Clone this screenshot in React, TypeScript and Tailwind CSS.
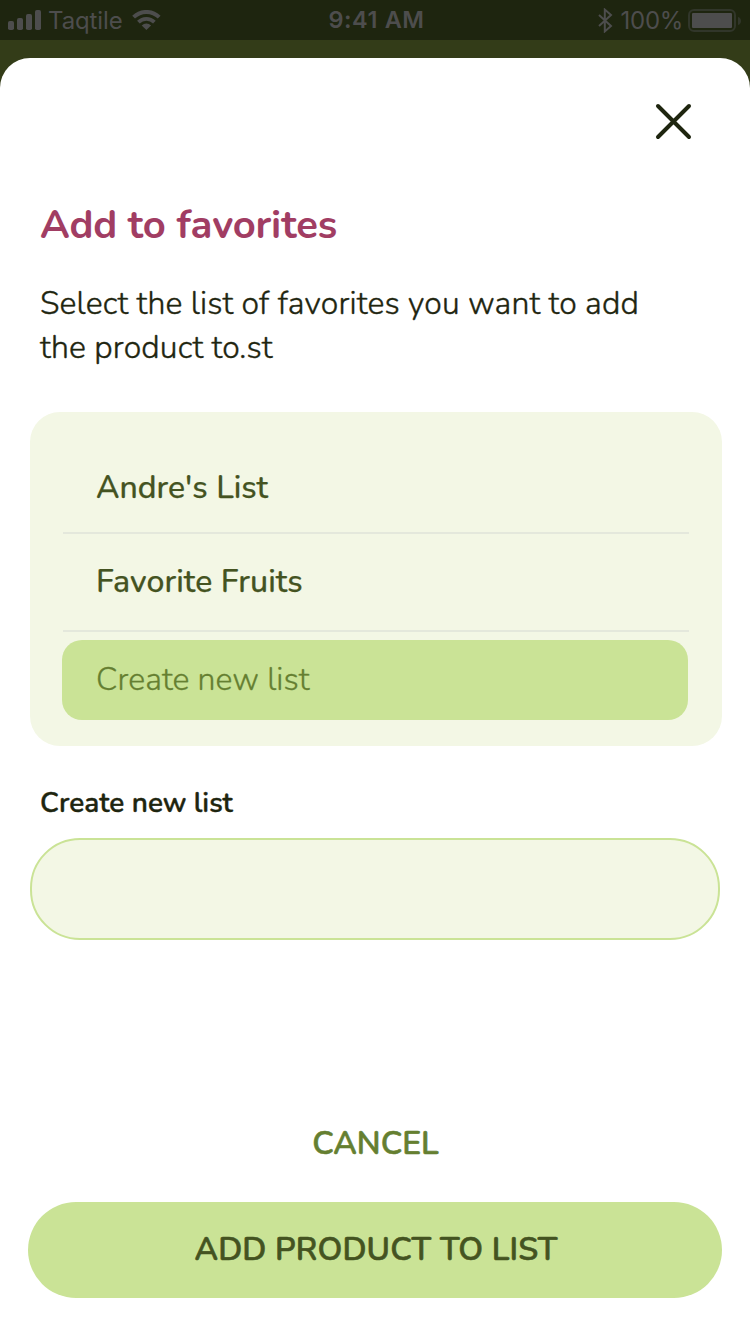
import React, { useState } from "react";

const lists = ["Andre's List", "Favorite Fruits"];

function StatusBar() {
  return (
    <header className="flex h-10 shrink-0 items-center justify-between bg-[#1e250f] text-[#4d4d4d] font-['Inter','Liberation_Sans',sans-serif] text-[24px] leading-10">
      <div className="flex flex-1 items-center pl-2">
        <svg width="33" height="20" viewBox="0 0 33 20" fill="currentColor">
          <rect x="0" y="11" width="6" height="9" rx="1.8" />
          <rect x="9" y="8" width="6" height="12" rx="1.8" />
          <rect x="18" y="4" width="6" height="16" rx="1.8" />
          <rect x="27" y="0" width="6" height="20" rx="1.8" />
        </svg>
        <span className="ml-[7px] w-[76px] pt-0.5 leading-[38px] tracking-[-0.1px] whitespace-nowrap">Taqtile</span>
        <svg className="ml-2" width="29" height="20" viewBox="0 0 29 20">
          <path d="M1.6 7.2A18.2 18.2 0 0 1 27.2 7.2" fill="none" stroke="currentColor" strokeWidth="4" />
          <path d="M6.4 12.1A11.4 11.4 0 0 1 22.4 12.1" fill="none" stroke="currentColor" strokeWidth="3.8" />
          <path d="M14.4 20 9.7 15.4a6.8 6.8 0 0 1 9.4 0Z" fill="currentColor" />
        </svg>
      </div>
      <span className="pl-[3px] text-[23.5px] font-semibold tracking-[0.6px] whitespace-nowrap">9:41 AM</span>
      <div className="flex flex-1 items-center justify-end pr-2">
        <svg width="15" height="25" viewBox="0 0 15 25" fill="none" stroke="currentColor" strokeWidth="2">
          <path d="m1 7 12 11-6.2 5.4V1.6L13 7 1 18" />
        </svg>
        <span className="ml-2 pt-0.5 leading-[38px] tracking-[-0.3px] whitespace-nowrap">100%</span>
        <svg className="mt-px ml-[5px]" width="54" height="24" viewBox="0 0 54 24">
          <rect x="1" y="1" width="46" height="21" rx="5" fill="none" stroke="#31362a" strokeWidth="2" />
          <rect x="4" y="4" width="40" height="15" rx="1" fill="currentColor" />
          <path d="M50 8c4 1 4 7 0 8Z" fill="#31362a" />
        </svg>
      </div>
    </header>
  );
}

export default function App() {
  const [name, setName] = useState("");
  return (
    <div className="flex h-[1334px] w-[750px] flex-col overflow-hidden bg-[#333c18] font-['Nunito','Lato',sans-serif]">
      <StatusBar />
      <main className="mt-[18px] flex flex-1 flex-col rounded-t-[30px] bg-white px-[30px] text-[#1e250f]">
        <div className="flex h-[141px] justify-end pt-[45px] pr-[28px]">
          <button aria-label="Close" className="h-[37px] w-[37px]">
            <svg width="37" height="37" viewBox="0 0 37 37" stroke="currentColor" strokeWidth="4" strokeLinecap="round">
              <path d="m3 3 31 31m0-31-31 31" />
            </svg>
          </button>
        </div>
        <h1 className="pt-0.5 pl-[10px] text-[40px] leading-[48px] font-bold tracking-[-0.15px] text-[#a13d63]">Add to favorites</h1>
        <p className="mt-[33px] pl-[10px] text-[32px] leading-[44px] font-light tracking-[0.14px] whitespace-nowrap [-webkit-text-stroke:0.4px_#1e250f]">
          Select the list of favorites you want to add
          <br />
          the product to.st
        </p>
        <section className="mt-[42px] h-[334px] w-[692px] rounded-[30px] bg-[#f3f7e5] px-8 pt-[27px] text-[32px] text-[#445321]">
          <ul className="[-webkit-text-stroke:0.25px_#445321]">
            {lists.map((item, i) => (
              <li
                key={item}
                className={
                  i === 0
                    ? "ml-px h-[95px] w-[626px] border-b-2 border-[#e4e8dc] pl-[33px] leading-[98px] font-medium"
                    : "ml-px h-[98px] w-[626px] border-b-2 border-[#e4e8dc] pl-[33px] leading-[96px] font-medium tracking-[0.08px]"
                }
              >
                {item}
              </li>
            ))}
          </ul>
          <button className="mt-2 block h-20 w-[626px] rounded-[20px] bg-[#cae396] pl-[34px] text-left leading-[78px] font-light tracking-[0.05px] text-[#657f31] [-webkit-text-stroke:0.3px_#657f31]">
            Create new list
          </button>
        </section>
        <label htmlFor="list-name" className="mt-[39px] pl-[10px] text-[28px] leading-[36px] font-semibold [-webkit-text-stroke:0.4px_#1e250f]">
          Create new list
        </label>
        <input
          id="list-name"
          value={name}
          onChange={(e) => setName(e.target.value)}
          className="mt-[17px] h-[102px] w-[690px] rounded-[50px] border-2 border-[#cae396] bg-[#f3f7e5] px-8 text-[32px]"
        />
        <button className="mt-[182px] ml-px h-[44px] self-center text-[32px] leading-[44px] font-semibold text-[#657f31] [-webkit-text-stroke:0.6px_#657f31]">CANCEL</button>
        <button className="mt-[36px] -ml-0.5 h-24 w-[694px] rounded-[48px] bg-[#cae396] pl-0.5 text-[32px] leading-[94px] font-semibold tracking-[0.14px] text-[#445321] [-webkit-text-stroke:0.6px_#445321]">
          ADD PRODUCT TO LIST
        </button>
      </main>
    </div>
  );
}
